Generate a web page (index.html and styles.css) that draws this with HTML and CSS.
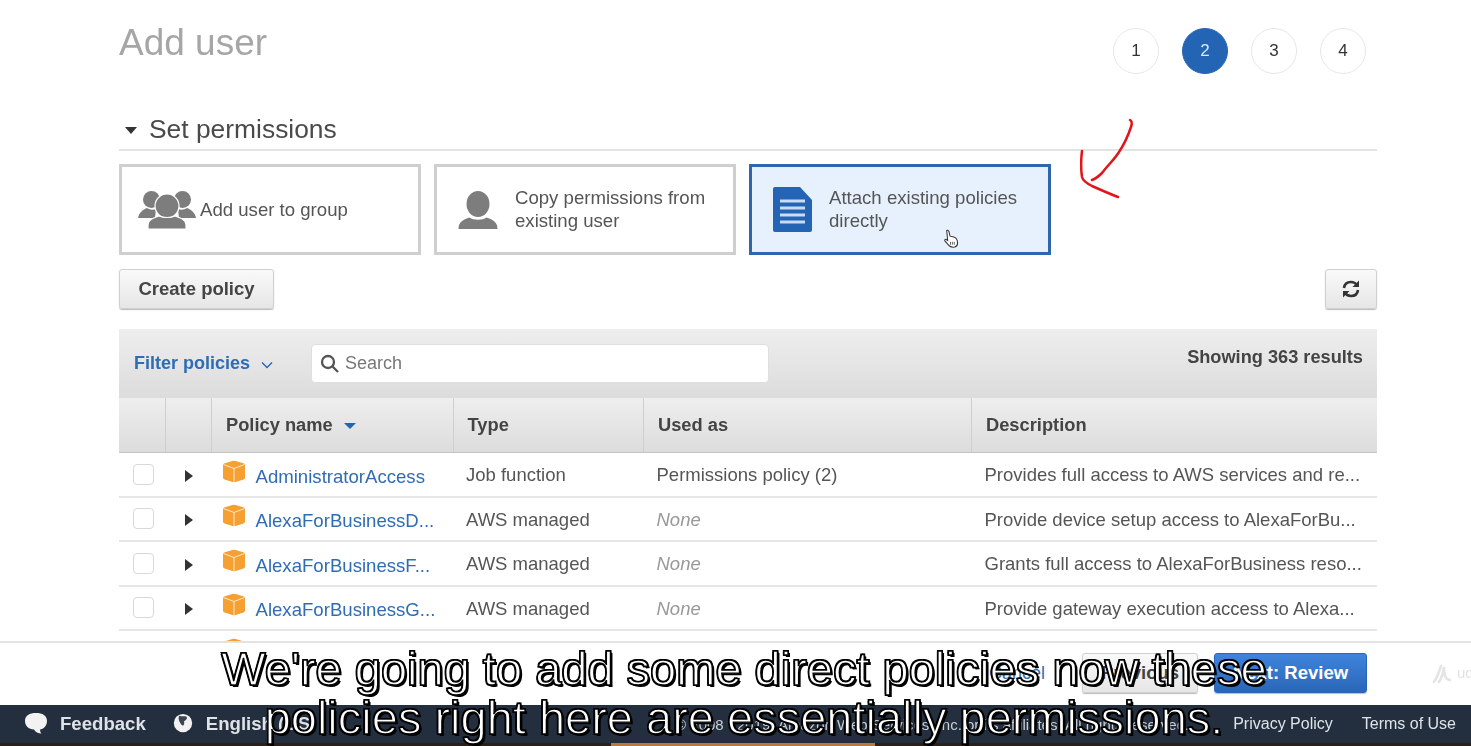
FILE: index.html
```html
<!DOCTYPE html>
<html>
<head>
<meta charset="utf-8">
<title>Add user</title>
<link rel="stylesheet" href="styles.css">
</head>
<body>
<div class="page">
  <div class="main">
    <div class="top">
      <h1>Add user</h1>
      <div class="steps">
        <span class="step">1</span>
        <span class="step on">2</span>
        <span class="step">3</span>
        <span class="step">4</span>
      </div>
    </div>
    <h2 class="section"><i class="caret-down"></i>Set permissions</h2>
    <div class="cards">
      <div class="card">
        <svg class="ico-group" viewBox="0 0 58 38">
          <circle cx="13.500" cy="8.500" r="8.500" fill="#7d7d7d"/>
          <circle cx="44.500" cy="8.500" r="8.500" fill="#7d7d7d"/>
          <path d="M0 27c1-5 4-8 9-10 3 2 6 2 9 1l-1 9z" fill="#7d7d7d"/>
          <path d="M58 27c-1-5-4-8-9-10-3 2-6 2-9 1l1 9z" fill="#7d7d7d"/>
          <circle cx="29" cy="15" r="12" fill="#7d7d7d" stroke="#fff" stroke-width="1.200"/>
          <path d="M10 38v-4c0-5 5-7 11-9 4 2 12 2 16 0 6 2 11 4 11 9v4z" fill="#7d7d7d" stroke="#fff" stroke-width="1.200"/>
        </svg>
        <span>Add user to group</span>
      </div>
      <div class="card">
        <svg class="ico-user" viewBox="0 0 40 38">
          <ellipse cx="20" cy="13" rx="11.500" ry="13" fill="#7d7d7d"/>
          <path d="M.5 38c0-6 3-9 11-11.500 4 3 13 3 17 0 8 2.500 11 5.500 11 11.500z" fill="#7d7d7d"/>
        </svg>
        <span class="wide">Copy permissions from existing user</span>
      </div>
      <div class="card active">
        <svg class="ico-doc" viewBox="0 0 39 45">
          <path d="M2 0h25l12 13v30a2 2 0 0 1-2 2H2a2 2 0 0 1-2-2V2a2 2 0 0 1 2-2z" fill="#2364b4"/>
          <path d="M7 14h25M7 21h25M7 28h25M7 35h25" stroke="#c9dcf4" stroke-width="3"/>
        </svg>
        <span class="wide">Attach existing policies directly</span>
      </div>
    </div>
    <div class="toolbar">
      <button class="btn">Create policy</button>
      <button class="btn refresh">
        <svg viewBox="0 0 20 20" width="20" height="20" fill="none" stroke="#333" stroke-width="2.600">
          <path d="M3 9c.5-4 3.500-6 7-6 2.500 0 4.500 1 6 3"/>
          <path d="M17 11c-.5 4-3.500 6-7 6-2.500 0-4.500-1-6-3"/>
          <path d="M18 1.500v6.500h-6.500z" fill="#333" stroke="none"/>
          <path d="M2 18.500v-6.500h6.500z" fill="#333" stroke="none"/>
        </svg>
      </button>
    </div>
    <div class="filter">
      <a class="filter-link">Filter policies</a>
      <svg class="chev" viewBox="0 0 12 8" width="12" height="8" fill="none" stroke="#2364b4" stroke-width="1.300"><path d="M1 1.500l5 5 5-5"/></svg>
      <div class="search">
        <svg viewBox="0 0 20 20" width="20" height="20" fill="none" stroke="#555" stroke-width="2.300"><circle cx="8" cy="8" r="6"/><path d="M12.500 12.500l5.500 5.500"/></svg>
        <span>Search</span>
      </div>
      <strong class="count">Showing 363 results</strong>
    </div>
    <table>
      <colgroup>
        <col class="c1"><col class="c2"><col class="c3"><col class="c4"><col class="c5"><col>
      </colgroup>
      <thead>
        <tr>
          <th></th><th></th>
          <th>Policy name <i class="sort"></i></th>
          <th>Type</th><th>Used as</th><th>Description</th>
        </tr>
      </thead>
      <tbody>
        <tr>
          <td><i class="check"></i></td><td><i class="expand"></i></td>
          <td><div class="name"><svg class="box" viewBox="0 0 22 22"><use href="#box"/></svg><a>AdministratorAccess</a></div></td>
          <td>Job function</td><td>Permissions policy (2)</td>
          <td>Provides full access to AWS services and re...</td>
        </tr>
        <tr>
          <td><i class="check"></i></td><td><i class="expand"></i></td>
          <td><div class="name"><svg class="box" viewBox="0 0 22 22"><use href="#box"/></svg><a>AlexaForBusinessD...</a></div></td>
          <td>AWS managed</td><td class="none">None</td>
          <td>Provide device setup access to AlexaForBu...</td>
        </tr>
        <tr>
          <td><i class="check"></i></td><td><i class="expand"></i></td>
          <td><div class="name"><svg class="box" viewBox="0 0 22 22"><use href="#box"/></svg><a>AlexaForBusinessF...</a></div></td>
          <td>AWS managed</td><td class="none">None</td>
          <td>Grants full access to AlexaForBusiness reso...</td>
        </tr>
        <tr>
          <td><i class="check"></i></td><td><i class="expand"></i></td>
          <td><div class="name"><svg class="box" viewBox="0 0 22 22"><use href="#box"/></svg><a>AlexaForBusinessG...</a></div></td>
          <td>AWS managed</td><td class="none">None</td>
          <td>Provide gateway execution access to Alexa...</td>
        </tr>
        <tr>
          <td><i class="check"></i></td><td><i class="expand"></i></td>
          <td><div class="name"><svg class="box" viewBox="0 0 22 22"><use href="#box"/></svg></div></td>
          <td></td><td></td><td></td>
        </tr>
      </tbody>
    </table>
  </div>
  <div class="actions">
    <a class="cancel">Cancel</a>
    <button class="btn prev">Previous</button>
    <button class="btn next">Next: Review</button>
    <svg class="mark" viewBox="0 0 24 22" fill="none" stroke="#e4e4e4" stroke-width="2.500" stroke-linecap="round"><path d="M3 19c3-4 5-10 7-16M8 19c2-3 4-8 5-15 0 6 1 13 6 13"/></svg>
    <span class="mark-text">ud</span>
  </div>
  <div class="footer">
    <svg class="foot-ico" viewBox="0 0 24 24" width="24" height="24"><path d="M12 1c6.500 0 11 2.500 11 8 0 5-3.500 8-7 8.500 0 1.500.5 3 1.500 4-3.500 0-6-1.500-7.500-4C4.500 17 1 14 1 9c0-5.500 4.500-8 11-8z" fill="#f2f2f2"/></svg>
    <b class="foot-feedback">Feedback</b>
    <svg class="foot-ico" viewBox="0 0 24 24" width="22" height="24"><circle cx="12" cy="11" r="10" fill="#f2f2f2"/><path d="M8 3c3 1 6 0 8 1 1 2-1 4-3 5 1 2 0 4-1 5-2-1-3-3-4-5-1-2-1-4 0-6z" fill="#3b4654"/></svg>
    <b class="foot-lang">English (US)</b>
    <span class="copy">© 2008 - 2019, Amazon Web Services, Inc. or its affiliates. All rights reserved.</span>
    <span class="foot-link">Privacy Policy</span>
    <span class="foot-link">Terms of Use</span>
  </div>
  <div class="strip"><i class="strip-glow"></i></div>

  <svg class="arrow" viewBox="0 0 60 90" width="60" height="90" fill="none" stroke="#e2151b" stroke-width="2.500" stroke-linecap="round">
    <path d="M50 2c2 1 2 4 1 7-3 9-6 16-12 25-5 8-11 13-17 21-3 3-7 6-10 7"/>
    <path d="M2 33c-1 8-1 19 0 26 1 4 4 6 10 9 9 4 18 8 26 11"/>
  </svg>
  <svg class="hand" viewBox="0 0 18 20" width="17" height="20"><path d="M5 1c1-.5 2 0 2.300 1l1.200 5 4 .8c2 .5 3 1.500 3.500 3.500l.5 3c0 2-1 3.700-3 4.200-3 .5-5 0-6.500-2L3 12c-.5-1 .5-2 1.500-1.500l1.500 1z" fill="#fff" stroke="#333" stroke-width="1.100"/><path d="M9 13v3M11 13v3M13 13v3" stroke="#555"/></svg>
  <div class="subs">We're going to add some direct policies now these<br>policies right here are essentially permissions.</div>
</div>

<svg class="defs" width="0" height="0">
  <symbol id="box" viewBox="0 0 22 22">
    <path d="M11 0l10 3q1 .5 1 2v12q0 1.500-1.500 2L11 22l-9.500-3Q0 18.500 0 17V5q0-1.500 1-2z" fill="#f5a030"/>
    <path d="M.5 4L11 8l10.500-4M11 8v14" fill="none" stroke="#fde9cf" stroke-width="1"/>
  </symbol>
</svg>
</body>
</html>
```
FILE: styles.css
```css
*{margin:0;padding:0;box-sizing:border-box;}
html,body{height:100%;}
body{background:#fff;font-family:"Liberation Sans",Arial,sans-serif;color:#444;overflow:hidden;}
.defs{position:absolute;}
.page{position:relative;width:1471px;height:746px;display:flex;flex-direction:column;overflow:hidden;}

/* the source is an upscaled video frame, so everything under the captions is soft */
.main,.actions,.footer,.arrow,.hand{filter:blur(.5px);}

.main{height:641px;padding:0 94px 0 119px;overflow:hidden;flex:none;}
.top{display:flex;justify-content:space-between;height:114px;padding-top:23px;}
h1{font-size:37px;line-height:40px;font-weight:normal;color:#a6a6a6;}
.steps{display:flex;gap:23px;padding:5px 11px 0 0;}
.step{width:46px;height:46px;border-radius:50%;border:1px solid #e6e6e6;display:flex;align-items:center;justify-content:center;font-size:17px;color:#333;}
.step.on{background:#2364b4;border-color:#2364b4;color:#dce9fa;}

.section{display:flex;align-items:center;height:37px;padding:2px 0 6px 6px;border-bottom:2px solid #e3e3e3;font-size:26.400px;font-weight:normal;color:#4a4a4a;}
.caret-down{width:0;height:0;border:6px solid transparent;border-top:7px solid #333;border-bottom:0;margin-right:12px;margin-top:2px;}

.cards{display:flex;gap:13px;padding-top:13px;}
.card{width:302px;height:91px;border:3px solid #cfcfcf;display:flex;align-items:center;padding-left:16px;font-size:18.600px;line-height:23px;color:#555;}
.card.active{background:#e6f1fd;border-color:#2f66ad;}
.card .wide{width:210px;margin-top:-2px;}
.ico-group{width:58px;height:38px;flex:none;margin-right:4px;}
.ico-user{width:40px;height:38px;flex:none;margin:0 17px 0 5px;}
.ico-doc{width:39px;height:45px;flex:none;margin:0 17px 0 5px;}

.toolbar{display:flex;justify-content:space-between;padding-top:14px;height:74px;}
.btn{height:40px;border:1px solid #d0d0d0;border-radius:3px;background:linear-gradient(#f9f9f9,#e6e6e6);box-shadow:0 1px 1px #bbb;font:bold 18.500px "Liberation Sans",Arial,sans-serif;color:#444;}
.toolbar .btn{width:155px;}
.toolbar .refresh{width:52px;display:flex;align-items:center;justify-content:center;}

.filter{display:flex;align-items:center;height:69px;padding:0 14px 0 15px;background:linear-gradient(#eeeeee,#dcdcdc);font-size:18px;}
.filter-link{font-weight:bold;color:#2f6cb5;}
.chev{margin:3px 0 0 11px;}
.search{display:flex;align-items:center;gap:5px;width:458px;height:39px;margin:0 auto 0 38px;padding-left:8px;background:#fff;border:1px solid #dfdfdf;border-radius:4px;color:#777;}
.count{color:#444;margin-top:-12px;font-size:18.200px;}

table{width:100%;table-layout:fixed;border-collapse:collapse;font-size:18.500px;}
.c1{width:46.500px;}
.c2{width:46px;}
.c3{width:241.500px;}
.c4{width:190.500px;}
.c5{width:328px;}
th{height:54px;text-align:left;padding-left:14px;background:linear-gradient(#eeeeee,#dcdcdc);border-left:1px solid #cfcfcf;border-bottom:1px solid #c4c4c4;color:#444;font-size:18.300px;}
th:first-child{border-left:0;}
td{height:44.500px;padding:2px 0 0 13px;border-bottom:2px solid #e6e6e6;color:#555;white-space:nowrap;}
td.none{font-style:italic;color:#999;}
.sort{display:inline-block;width:0;height:0;margin:0 0 2px 6px;border:6px solid transparent;border-top:6px solid #2364b4;border-bottom:0;}
.check{display:block;width:21px;height:21px;margin:-2px 0 0 1px;border:1px solid #d8d8d8;border-radius:4px;background:#fff;}
.expand{display:block;width:0;height:0;margin:1px 0 0 6px;border:6px solid transparent;border-left:8px solid #333;border-right:0;}
.name{display:flex;align-items:center;gap:11px;}
.name a{color:#2f6cb5;font-size:18.600px;margin-top:3px;}
.box{width:22px;height:23px;flex:none;margin:-8px 0 0 -2px;}

.actions{height:64px;flex:none;display:flex;align-items:center;padding:0 104px 2px 0;border-top:2px solid #e3e3e3;position:relative;background:#fff;justify-content:flex-end;font-size:18px;}
.cancel{color:#2f6cb5;margin-right:37px;}
.actions .prev{width:116px;margin-right:16px;}
.actions .next{width:153px;background:linear-gradient(#3f84dd,#2a66b8);border-color:#2a66b8;color:#fff;}
.mark{position:absolute;left:1431px;top:20px;width:24px;height:22px;}
.mark-text{position:absolute;left:1457px;top:21px;font-size:15px;color:#e2e2e2;}

.footer{height:38px;flex:none;display:flex;align-items:center;background:#232f3e;color:#dfe3e8;font-size:16px;padding-left:24px;}
.foot-ico{flex:none;}
.foot-feedback{font-size:18.600px;margin:0 26px 0 12px;}
.foot-lang{font-size:18.600px;margin:0 0 0 12px;}
.copy{margin:0 15px 0 auto;font-size:15px;color:#c9ced4;}
.foot-link{margin-left:29px;}
.foot-link:last-child{margin-right:15px;}
.strip{flex:1;position:relative;background:#2a2018;}
.strip-glow{display:block;width:264px;height:100%;margin-left:611px;background:#b87a3c;}

.arrow{position:absolute;left:1080px;top:118px;}
.hand{position:absolute;left:942px;top:229px;}
.subs{position:absolute;left:17px;right:0;top:644px;text-align:center;font-size:47px;line-height:49px;color:#fff;-webkit-text-stroke:1.400px #000;text-shadow:2px 2px 0 #000,1px 1px 0 #000,-1px -1px 0 #000,1px -1px 0 #000,-1px 1px 0 #000;}
```
